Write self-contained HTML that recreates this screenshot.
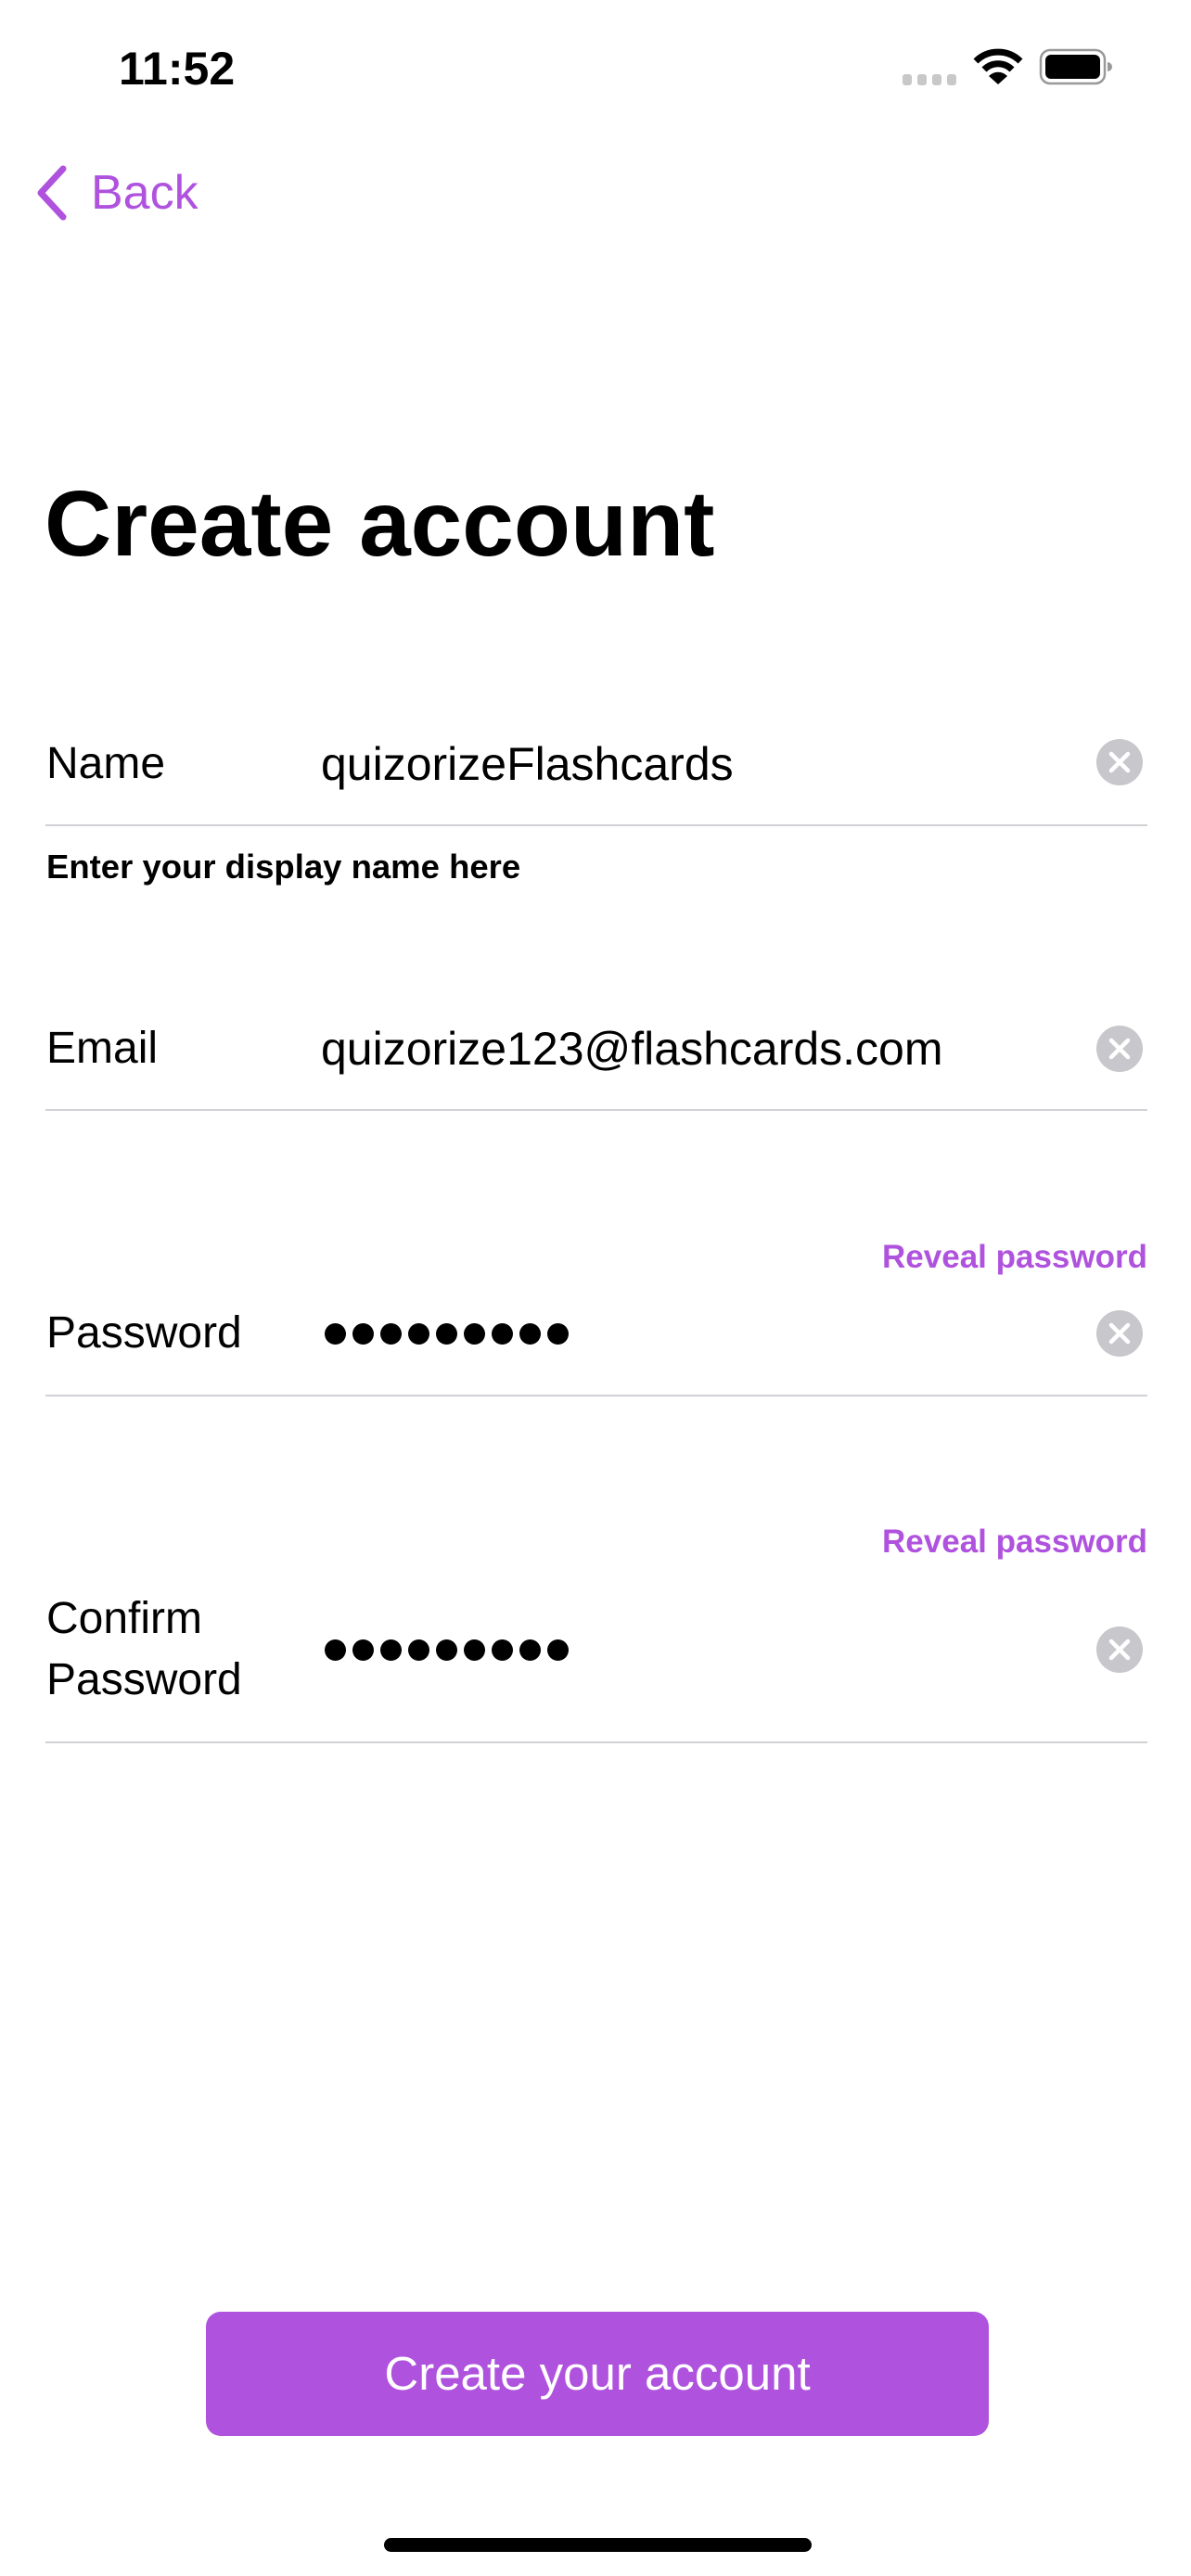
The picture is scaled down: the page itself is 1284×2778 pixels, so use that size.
<!DOCTYPE html>
<html><head><meta charset="utf-8"><style>
*{margin:0;padding:0;box-sizing:border-box}
html,body{width:1284px;height:2778px;background:#fff;overflow:hidden;font-family:"Liberation Sans",sans-serif;color:#000}
.a{position:absolute;white-space:nowrap}
.lbl{font-size:48px;line-height:60px;left:50px}
.val{font-size:50px;line-height:60px;left:346px}
.div{position:absolute;left:49px;width:1188px;height:2px;background:#d1d1d6}
.rev{font-size:35px;font-weight:bold;color:#AF52DE;right:47px;line-height:40px}
.clr{position:absolute;left:1182px;width:50px;height:50px}
.dots{position:absolute;left:350px;display:flex;gap:7px}
.dots i{display:block;width:23px;height:23px;border-radius:50%;background:#000}
</style></head><body>
<div class="a" style="left:128px;top:44px;font-size:50px;font-weight:bold;line-height:60px">11:52</div>
<svg class="a" style="left:970px;top:50px" width="240" height="46" viewBox="970 50 240 46">
<rect x="973" y="80" width="10" height="12" rx="3" fill="#c8c8c8"/>
<rect x="989" y="80" width="10" height="12" rx="3" fill="#c8c8c8"/>
<rect x="1005" y="80" width="10" height="12" rx="3" fill="#c8c8c8"/>
<rect x="1021" y="80" width="10" height="12" rx="3" fill="#c8c8c8"/>
<path d="M1052 66 A34 34 0 0 1 1100 66" stroke="#000" stroke-width="7" fill="none"/>
<path d="M1061 75 A21 21 0 0 1 1091 75" stroke="#000" stroke-width="7" fill="none"/>
<path d="M1076 91 L1066 82 A14 14 0 0 1 1086 82 Z" fill="#000"/>
<rect x="1122" y="54" width="69" height="36" rx="10" fill="none" stroke="#999" stroke-width="2.5"/>
<rect x="1127" y="59" width="59" height="26" rx="6" fill="#000"/>
<path d="M1194 67 A5 5 0 0 1 1194 77 Z" fill="#999"/>
</svg>
<svg class="a" style="left:36px;top:176px" width="40" height="64" viewBox="0 0 40 64"><path d="M32 6 L8 32 L32 58" stroke="#AF52DE" stroke-width="7" fill="none" stroke-linecap="round" stroke-linejoin="round"/></svg>
<div class="a" style="left:98px;top:178px;font-size:52px;line-height:60px;color:#AF52DE">Back</div>
<div class="a" style="left:48px;top:505px;font-size:100px;font-weight:bold;line-height:120px">Create account</div>

<div class="a lbl" style="top:794px">Name</div>
<div class="a val" style="top:794px">quizorizeFlashcards</div>
<svg class="clr" style="top:797px" viewBox="0 0 50 50"><circle cx="25" cy="25" r="25" fill="#c7c7cc"/><path d="M16 16L34 34M34 16L16 34" stroke="#fff" stroke-width="4.5" stroke-linecap="round"/></svg>
<div class="div" style="top:889px"></div>
<div class="a" style="left:50px;top:914px;font-size:36.5px;font-weight:bold;line-height:42px">Enter your display name here</div>

<div class="a lbl" style="top:1101px">Email</div>
<div class="a val" style="top:1101px">quizorize123@flashcards.com</div>
<svg class="clr" style="top:1106px" viewBox="0 0 50 50"><circle cx="25" cy="25" r="25" fill="#c7c7cc"/><path d="M16 16L34 34M34 16L16 34" stroke="#fff" stroke-width="4.5" stroke-linecap="round"/></svg>
<div class="div" style="top:1196px"></div>

<div class="a rev" style="top:1336px">Reveal password</div>
<div class="a lbl" style="top:1408px">Password</div>
<div class="dots" style="top:1427px"><i></i><i></i><i></i><i></i><i></i><i></i><i></i><i></i><i></i></div>
<svg class="clr" style="top:1413px" viewBox="0 0 50 50"><circle cx="25" cy="25" r="25" fill="#c7c7cc"/><path d="M16 16L34 34M34 16L16 34" stroke="#fff" stroke-width="4.5" stroke-linecap="round"/></svg>
<div class="div" style="top:1504px"></div>

<div class="a rev" style="top:1643px">Reveal password</div>
<div class="a lbl" style="top:1716px">Confirm</div>
<div class="a lbl" style="top:1782px">Password</div>
<div class="dots" style="top:1768px"><i></i><i></i><i></i><i></i><i></i><i></i><i></i><i></i><i></i></div>
<svg class="clr" style="top:1754px" viewBox="0 0 50 50"><circle cx="25" cy="25" r="25" fill="#c7c7cc"/><path d="M16 16L34 34M34 16L16 34" stroke="#fff" stroke-width="4.5" stroke-linecap="round"/></svg>
<div class="div" style="top:1878px"></div>

<div class="a" style="left:222px;top:2493px;width:844px;height:134px;background:#AF52DE;border-radius:16px;color:#fff;font-size:51px;line-height:134px;text-align:center">Create your account</div>
<div class="a" style="left:414px;top:2737px;width:461px;height:15px;border-radius:8px;background:#000"></div>
</body></html>
